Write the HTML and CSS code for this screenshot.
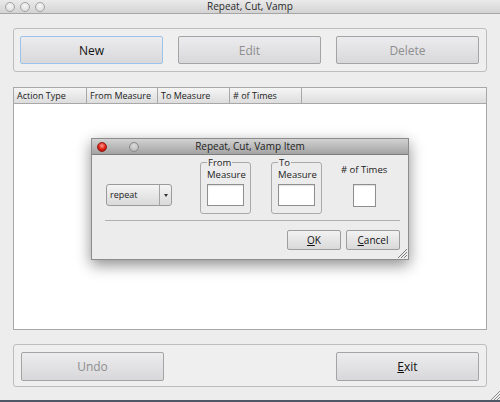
FILE: index.html
```html
<!DOCTYPE html>
<html>
<head>
<meta charset="utf-8">
<link rel="stylesheet" href="styles.css">
</head>
<body>
<div class="window">
  <div class="titlebar">
    <div class="lights"><span class="light"></span><span class="light"></span><span class="light"></span></div>
    <div class="title">Repeat, Cut, Vamp</div>
    <div></div>
  </div>
  <div class="content">
    <div class="panel top">
      <button class="btn focus">New</button>
      <button class="btn disabled">Edit</button>
      <button class="btn disabled">Delete</button>
    </div>
    <div class="table">
      <div class="thead">
        <div class="th c1">Action Type</div>
        <div class="th c2">From Measure</div>
        <div class="th c3">To Measure</div>
        <div class="th c4"># of Times</div>
        <div class="th fill"></div>
      </div>
      <div class="tbody"></div>
    </div>
    <div class="panel bottom">
      <button class="btn disabled">Undo</button>
      <button class="btn"><u>E</u>xit</button>
    </div>
  </div>
  <svg class="grip" width="10" height="10" viewBox="0 0 10 10"><path d="M10 1 L1 10 M10 4 L4 10 M10 7 L7 10" stroke="#8a8a8a" stroke-width="1"/></svg>
</div>

<div class="dialog">
  <div class="dlg-title">
    <div class="dlg-lights"><span class="light close"></span><span class="light off"></span></div>
    <div class="title">Repeat, Cut, Vamp Item</div>
    <div></div>
  </div>
  <div class="dlg-body">
    <div class="row">
      <div class="combo"><span class="val">repeat</span><span class="arrow"><span class="tri"></span></span></div>
      <fieldset class="group g1">
        <legend>From</legend>
        <div class="lbl">Measure</div>
        <div class="field"></div>
      </fieldset>
      <fieldset class="group g2">
        <legend>To</legend>
        <div class="lbl">Measure</div>
        <div class="field"></div>
      </fieldset>
      <div class="times">
        <div class="lbl">#&nbsp;of Times</div>
        <div class="field small"></div>
      </div>
    </div>
    <div class="sep"></div>
    <div class="actions">
      <button class="dbtn"><u>O</u>K</button>
      <button class="dbtn"><u>C</u>ancel</button>
    </div>
  </div>
  <svg class="grip dgrip" width="10" height="10" viewBox="0 0 10 10"><path d="M10 1 L1 10 M10 4 L4 10 M10 7 L7 10" stroke="#7a7a7a" stroke-width="1"/></svg>
</div>
</body>
</html>
```
FILE: styles.css
```css
* { box-sizing: border-box; }
body {
  margin: 0;
  width: 500px;
  height: 402px;
  overflow: hidden;
  position: relative;
  background: #4f5866;
  font-family: "Open Sans", "Liberation Sans", sans-serif;
  color: #1a1a1a;
}
.window {
  height: 400px;
  background: #ededed;
  display: flex;
  flex-direction: column;
  position: relative;
}
.titlebar {
  height: 14px;
  border-bottom: 1px solid #a6a6a6;
  background: linear-gradient(#eaeaea, #d3d3d3);
  display: grid;
  grid-template-columns: 1fr auto 1fr;
  align-items: center;
}
.lights { display: flex; gap: 5px; padding-left: 5px; }
.light {
  width: 10px;
  height: 10px;
  border-radius: 50%;
  border: 1px solid #a3a3a3;
  background: radial-gradient(circle at 50% 35%, #f7f7f7, #d6d6d6);
}
.title { font-size: 10px; line-height: 13px; color: #2a2a2a; }

.content {
  flex: 1;
  display: flex;
  flex-direction: column;
  padding: 14px 13px 13px;
}
.panel {
  border: 1px solid #bdbdbd;
  border-radius: 3px;
  background: #efefef;
  display: flex;
  justify-content: space-between;
}
.panel.top { padding: 7px 7px 7px 6px; margin-bottom: 15px; }
.panel.bottom { padding: 7px 7px 5px 7px; }
.btn {
  width: 143px;
  height: 28px;
  padding: 0;
  font-family: "Open Sans", "Liberation Sans", sans-serif;
  font-size: 12px;
  color: #111;
  border: 1px solid #a4a4a4;
  border-radius: 2px;
  background: linear-gradient(#ececee, #d8d8db);
}
.panel.bottom .btn { height: 29px; }
.btn.focus { border-color: #9cc3ea; }
.btn.disabled { color: #8e8e8e; }
u { text-decoration: underline; text-underline-offset: 1px; }

.table {
  flex: 1;
  border: 1px solid #a8a8a8;
  background: #fff;
  margin-bottom: 14px;
  display: flex;
  flex-direction: column;
}
.thead {
  height: 16px;
  display: flex;
  border-bottom: 1px solid #a8a8a8;
  background: linear-gradient(#f5f5f5, #dddddd);
}
.th {
  border-right: 1px solid #a8a8a8;
  font-size: 9px;
  line-height: 15px;
  padding-left: 3px;
  color: #222;
  white-space: nowrap;
}
.c1 { width: 73px; }
.c2 { width: 71px; }
.c3 { width: 72px; }
.c4 { width: 72px; }
.th.fill { flex: 1; border-right: 0; }

.grip { position: absolute; right: 0; bottom: 0; }

.dialog {
  position: absolute;
  left: 91px;
  top: 138px;
  width: 318px;
  height: 122px;
  background: #ececec;
  border: 1px solid #8c8c8c;
  box-shadow: 0 5px 14px rgba(0, 0, 0, 0.45);
}
.dlg-title {
  height: 16px;
  background: linear-gradient(#d2d2d2, #a3a3a3);
  border-bottom: 1px solid #7d7d7d;
  display: grid;
  grid-template-columns: 1fr auto 1fr;
  align-items: center;
}
.dlg-lights { display: flex; gap: 22px; padding-left: 5px; }
.light.close {
  border-color: #8e1a14;
  background: radial-gradient(circle at 50% 35%, #ff9a90, #e01c10 55%, #9c0a04);
}
.light.off {
  border-color: #8a8a8a;
  background: radial-gradient(circle at 50% 35%, #dcdcdc, #b0b0b0);
}
.dlg-title .title { color: #1e1e1e; }

.dlg-body { padding: 2px 8px 0 13px; }
.row { display: flex; align-items: flex-start; }
.combo {
  margin-top: 27px;
  margin-left: 1px;
  width: 66px;
  height: 22px;
  display: flex;
  border: 1px solid #9b9b9b;
  border-radius: 3px;
  background: linear-gradient(#f4f4f4, #dadada);
}
.combo .val { flex: 1; font-size: 9px; line-height: 20px; padding-left: 3px; }
.combo .arrow {
  width: 12px;
  border-left: 1px solid #a4a4a4;
  display: flex;
  align-items: center;
  justify-content: center;
}
.tri {
  width: 0;
  height: 0;
  border-left: 2.5px solid transparent;
  border-right: 2.5px solid transparent;
  border-top: 3px solid #333;
}
.group {
  margin: 0;
  min-width: 0;
  padding: 0 6px 7px;
  border: 1px solid #a9a9a9;
  border-radius: 3px;
}
.g1 { width: 51px; margin-left: 28px; }
.g2 { width: 51px; margin-left: 20px; }
legend {
  font-size: 9.5px;
  line-height: 11px;
  padding: 0 1px;
  color: #222;
}
.lbl { font-size: 9.5px; line-height: 14px; text-align: center; white-space: nowrap; color: #222; }
.field {
  width: 37px;
  height: 22px;
  margin-top: 2px;
  background: #fff;
  border: 1px solid #8f8f8f;
  box-shadow: inset 0 1px 1px rgba(0, 0, 0, 0.12);
}
.times {
  margin-left: 19px;
  padding-top: 6px;
  display: flex;
  flex-direction: column;
  align-items: center;
}
.field.small { width: 23px; height: 23px; margin-top: 7px; }
.sep {
  height: 1px;
  background: #b0b0b0;
  margin-top: 6px;
}
.actions { display: flex; justify-content: flex-end; gap: 5px; margin-top: 9px; }
.dbtn {
  width: 54px;
  height: 20px;
  padding: 0;
  font-family: "Open Sans", "Liberation Sans", sans-serif;
  font-size: 10px;
  color: #111;
  border: 1px solid #9d9d9d;
  border-radius: 2px;
  background: linear-gradient(#f2f2f2, #d9d9d9);
}
.dgrip { right: 1px; bottom: 1px; }
```
